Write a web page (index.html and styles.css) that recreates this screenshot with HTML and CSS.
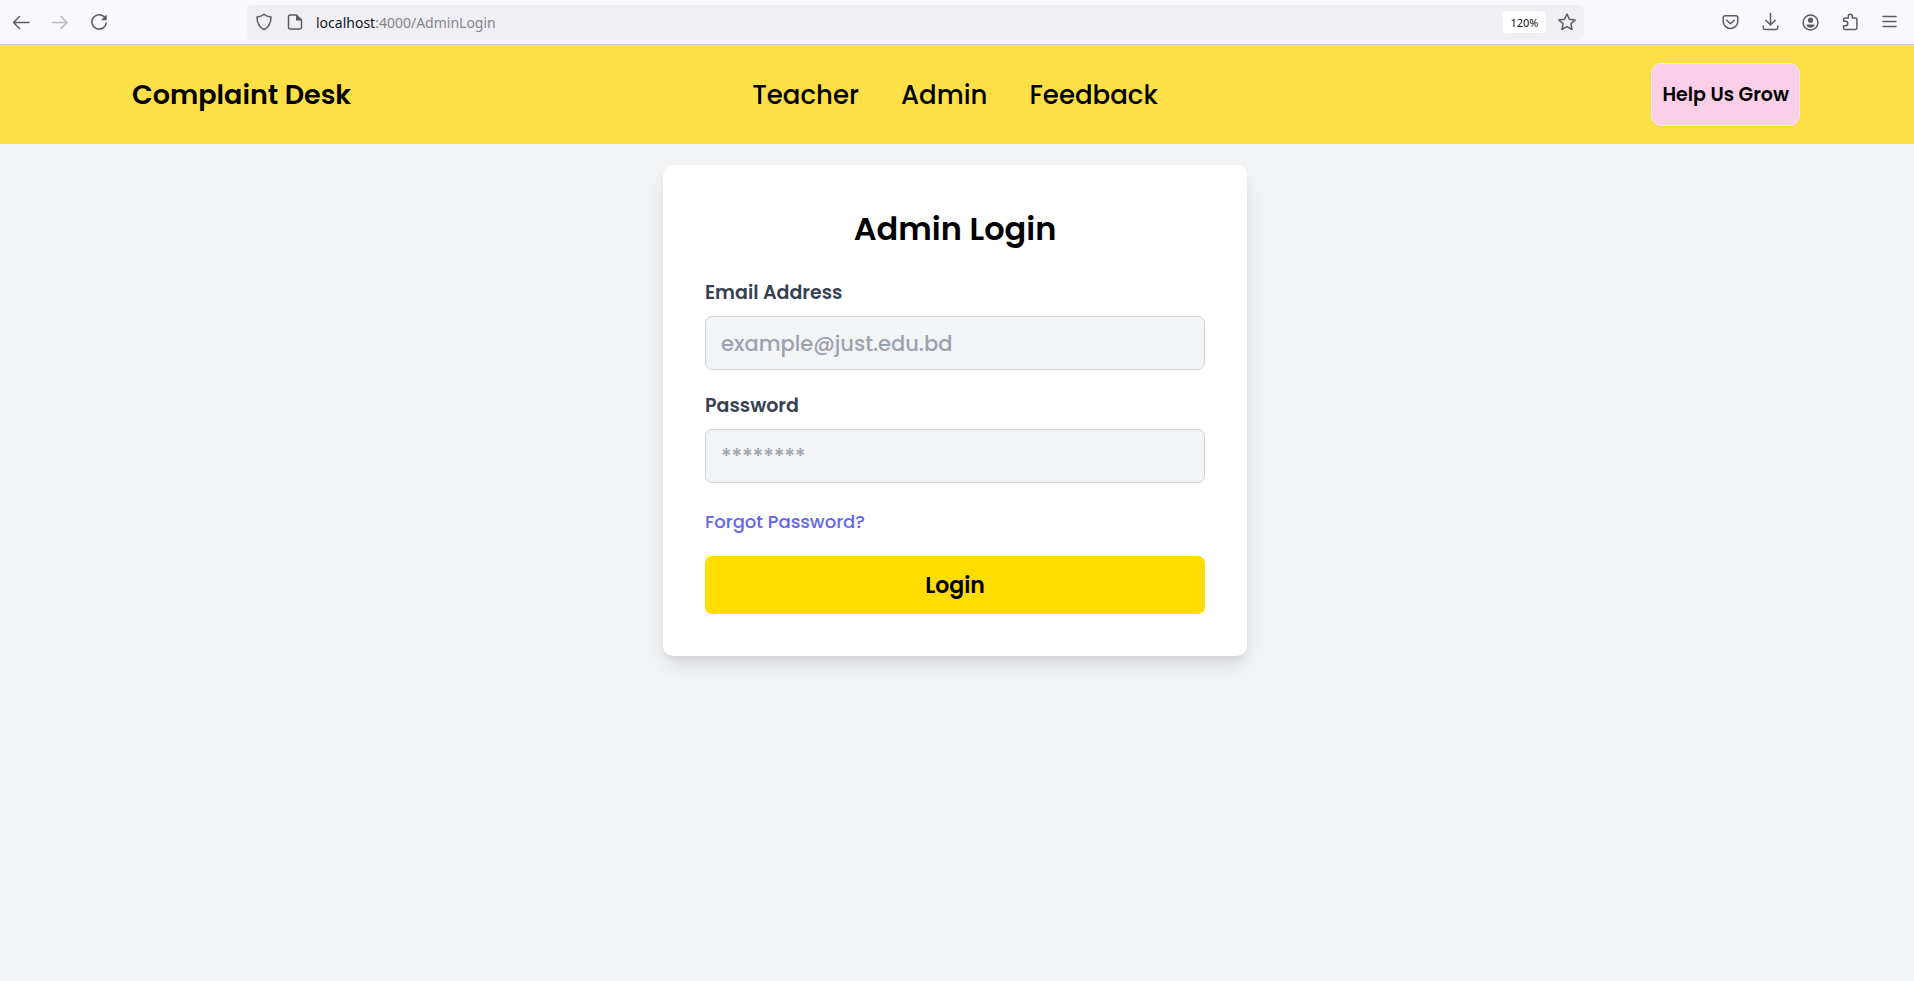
FILE: index.html
```html
<!DOCTYPE html>
<html lang="en">
<head>
<meta charset="utf-8">
<title>Complaint Desk</title>
<link rel="stylesheet" href="styles.css">
</head>
<body>
<div class="toolbar">
  <div class="tools tools-left">
    <button class="tool" type="button" aria-label="Back"><svg class="icon" viewBox="0 0 20 20"><path d="M18 10.500H2.500M8.500 4.500l-6 6 6 6"/></svg></button>
    <button class="tool" type="button" aria-label="Forward" disabled><svg class="icon" viewBox="0 0 20 20"><path d="M2.500 10.500H17M11 4.500l6 6-6 6"/></svg></button>
    <button class="tool" type="button" aria-label="Reload"><svg class="icon" viewBox="0 0 20 20"><path d="M16.300 6.200A7.200 7.200 0 1 0 17.200 11"/><path class="solid" d="M17.700 2.500v5.700H12z"/></svg></button>
  </div>
  <div class="address">
    <svg class="icon" viewBox="0 0 20 20"><path d="M10 2.200c2 1.700 4.200 2.400 7 2.700 0 5.600-2 10-7 12.700-5-2.700-7-7.100-7-12.700 2.800-.3 5-1 7-2.700z"/></svg>
    <svg class="icon" viewBox="0 0 20 20"><path d="M11.500 3H5.200A1.700 1.700 0 0 0 3.500 4.700v10.600A1.700 1.700 0 0 0 5.200 17h9.600a1.700 1.700 0 0 0 1.700-1.700V8z"/><path class="solid" d="M11 3v5.500h5.700z"/></svg>
    <span class="url"><span class="host">localhost</span>:4000/AdminLogin</span>
    <button class="zoom" type="button">120%</button>
    <button class="star" type="button" aria-label="Bookmark this page"><svg class="icon" viewBox="0 0 20 20"><path d="M10 2l2.400 5.200 5.800.7-4.300 3.900 1.200 5.700-5.100-2.900-5.100 2.900 1.200-5.700-4.300-3.900 5.800-.7z"/></svg></button>
  </div>
  <div class="tools tools-right">
    <button class="tool" type="button" aria-label="Save to Pocket"><svg class="icon" viewBox="0 0 20 20"><path d="M5 3.800h11a1.800 1.800 0 0 1 1.800 1.800v3.600a7.300 7.300 0 0 1-14.600 0V5.600A1.800 1.800 0 0 1 5 3.800zM6.800 8.200l3.700 3.500 3.700-3.500"/></svg></button>
    <button class="tool" type="button" aria-label="Downloads"><svg class="icon" viewBox="0 0 20 20"><path d="M10.500 1.500v11.300M5.800 8.200l4.700 4.700 4.700-4.700M3.300 14v1.700a1.700 1.700 0 0 0 1.700 1.700h11a1.700 1.700 0 0 0 1.700-1.700V14"/></svg></button>
    <button class="tool" type="button" aria-label="Account"><svg class="icon" viewBox="0 0 20 20"><circle cx="10.500" cy="10.500" r="7.400"/><circle class="solid" cx="10.500" cy="8.200" r="2.600"/><path class="solid" d="M6.300 12.400h8.400c-.6 2.200-2.200 3.300-4.200 3.300s-3.600-1.100-4.200-3.300z"/></svg></button>
    <button class="tool" type="button" aria-label="Extensions"><svg class="icon" viewBox="0 0 20 20"><path d="M3.600 9.200V7.300a1.400 1.400 0 0 1 1.400-1.400h3.300V4.200a2 2 0 0 1 4 0v1.700h3.200A1.400 1.400 0 0 1 16.900 7.300v8.800a1.400 1.400 0 0 1-1.400 1.400H5a1.400 1.400 0 0 1-1.400-1.400v-2.300h1.900a2.300 2.300 0 0 0 0-4.600z"/></svg></button>
    <button class="tool" type="button" aria-label="Menu"><svg class="icon" viewBox="0 0 20 20"><path d="M3 4.500h13M3 9.500h13M3 14.500h13"/></svg></button>
  </div>
</div>

<header class="navbar">
  <a class="brand" href="#">Complaint Desk</a>
  <nav class="links">
    <a href="#">Teacher</a>
    <a href="#">Admin</a>
    <a href="#">Feedback</a>
  </nav>
  <button class="grow" type="button">Help Us Grow</button>
</header>

<main class="page">
  <form class="card">
    <h1 class="title">Admin Login</h1>
    <div class="field">
      <label for="email">Email Address</label>
      <input id="email" type="email" placeholder="example@just.edu.bd">
    </div>
    <div class="field">
      <label for="password">Password</label>
      <input id="password" type="password" placeholder="********">
    </div>
    <a class="forgot" href="#">Forgot Password?</a>
    <button class="login" type="submit">Login</button>
  </form>
</main>
</body>
</html>
```
FILE: styles.css
```css
* { box-sizing: border-box; }

body {
  margin: 0;
  min-height: 100vh;
  display: flex;
  flex-direction: column;
  background: #f3f4f6;
  color: #000;
  font-family: Poppins, Inter, "Open Sans", sans-serif;
}

a { color: inherit; text-decoration: none; }

button, input { font: inherit; color: inherit; }

button { border: 0; padding: 0; background: none; cursor: pointer; }

/* Browser toolbar */
.toolbar {
  display: flex;
  align-items: center;
  height: 45px;
  background: #f9f9fb;
  border-bottom: 1px solid #cccccf;
  color: #5b5b66;
  font-family: "Segoe UI", "Noto Sans", sans-serif;
}

.tools { display: flex; }
.tools-left { padding-left: 1px; margin-right: 129px; }
.tools-right { padding-right: 4px; margin-left: 126px; }

.tool {
  display: flex;
  justify-content: center;
  align-items: center;
  width: 39px;
  height: 40px;
}
.tools-right .tool { width: 40px; }
.tool:disabled { opacity: 0.4; }

.icon {
  display: block;
  flex: none;
  width: 20px;
  height: 20px;
  fill: none;
  stroke: currentColor;
  stroke-width: 1.5;
  stroke-linecap: round;
  stroke-linejoin: round;
}
.icon .solid { fill: currentColor; stroke: none; }

.address {
  flex: 1;
  display: flex;
  align-items: center;
  gap: 11px;
  height: 35px;
  padding: 0 7px;
  border-radius: 5px;
  background: #f0f0f4;
}

.url { flex: 1; font-size: 14px; color: #85858c; }
.host { color: #15141a; }

.zoom {
  width: 43px;
  height: 22px;
  border-radius: 4px;
  background: #fff;
  color: #15141a;
  font-size: 11px;
}

/* Site header */
.navbar {
  display: grid;
  grid-template-columns: 1fr auto 1fr;
  align-items: center;
  padding: 18px 114px 18px 110px;
  background: #fde047;
}

.brand { padding-left: 22px; font-size: 27px; line-height: 42px; font-weight: 600; }

.links { display: flex; gap: 42px; font-size: 26px; line-height: 42px; font-weight: 500; }

.grow {
  justify-self: end;
  height: 63px;
  padding: 0 10px;
  border: 1px solid #f3e8ff;
  border-radius: 10px;
  background: #fbcfe8;
  box-shadow: 0 1px 2px rgba(0, 0, 0, 0.05);
  font-size: 19px;
  font-weight: 600;
}

/* Login card */
.page {
  display: flex;
  justify-content: center;
  padding: 21px 24px 21px 20px;
}

.card {
  width: 100%;
  max-width: 584px;
  padding: 42px;
  border-radius: 10px;
  background: #fff;
  box-shadow: 0 12px 24px -3px rgba(0, 0, 0, 0.1), 0 5px 8px -3px rgba(0, 0, 0, 0.1);
}

.title {
  margin: 0 0 28px;
  font-size: 32px;
  line-height: 43px;
  font-weight: 600;
  text-align: center;
}

.field { display: flex; flex-direction: column; gap: 9px; margin-bottom: 21px; }

.field label { font-size: 19px; line-height: 29px; font-weight: 600; color: #374151; }

.field input {
  width: 100%;
  height: 54px;
  padding: 0 15px;
  border: 1px solid #d1d5db;
  border-radius: 7px;
  background: #f3f4f6;
  color: #111827;
  font-size: 21px;
  font-weight: 500;
}
.field input::placeholder { color: #9ca3af; opacity: 1; }

.forgot {
  display: block;
  margin: 24px 0 20px;
  font-size: 18px;
  line-height: 29px;
  font-weight: 500;
  color: #6366f1;
}

.login {
  display: block;
  width: 100%;
  height: 58px;
  border-radius: 7px;
  background: #ffdd00;
  font-size: 22px;
  font-weight: 600;
}
```
